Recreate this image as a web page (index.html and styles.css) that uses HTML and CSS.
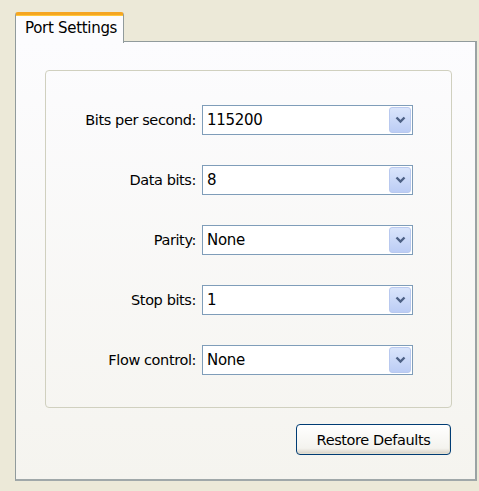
FILE: index.html
```html
<!DOCTYPE html>
<html>
<head>
<meta charset="utf-8">
<title>Port Settings</title>
<link rel="stylesheet" href="styles.css">
</head>
<body>
<div class="window">
  <div class="tabs">
    <div class="tab active">Port Settings</div>
  </div>
  <div class="panel">
    <fieldset class="group">
      <div class="row">
        <label class="label">Bits per second:</label>
        <div class="combo"><span class="value">115200</span><span class="drop"><svg width="11" height="8" viewBox="0 0 11 8"><path d="M1.5 1.5 L5.5 5.5 L9.5 1.5" fill="none" stroke="#4d6185" stroke-width="2.4"/></svg></span></div>
      </div>
      <div class="row">
        <label class="label">Data bits:</label>
        <div class="combo"><span class="value">8</span><span class="drop"><svg width="11" height="8" viewBox="0 0 11 8"><path d="M1.5 1.5 L5.5 5.5 L9.5 1.5" fill="none" stroke="#4d6185" stroke-width="2.4"/></svg></span></div>
      </div>
      <div class="row">
        <label class="label">Parity:</label>
        <div class="combo"><span class="value">None</span><span class="drop"><svg width="11" height="8" viewBox="0 0 11 8"><path d="M1.5 1.5 L5.5 5.5 L9.5 1.5" fill="none" stroke="#4d6185" stroke-width="2.4"/></svg></span></div>
      </div>
      <div class="row">
        <label class="label">Stop bits:</label>
        <div class="combo"><span class="value">1</span><span class="drop"><svg width="11" height="8" viewBox="0 0 11 8"><path d="M1.5 1.5 L5.5 5.5 L9.5 1.5" fill="none" stroke="#4d6185" stroke-width="2.4"/></svg></span></div>
      </div>
      <div class="row">
        <label class="label">Flow control:</label>
        <div class="combo"><span class="value">None</span><span class="drop"><svg width="11" height="8" viewBox="0 0 11 8"><path d="M1.5 1.5 L5.5 5.5 L9.5 1.5" fill="none" stroke="#4d6185" stroke-width="2.4"/></svg></span></div>
      </div>
    </fieldset>
    <div class="actions">
      <button class="btn">Restore Defaults</button>
    </div>
  </div>
</div>
</body>
</html>
```
FILE: styles.css
```css
html, body {
  margin: 0;
  padding: 0;
  background: #ece9d8;
}

body {
  font-family: "DejaVu Sans", "Liberation Sans", sans-serif;
  font-size: 14px;
  color: #000;
}

.window {
  padding: 12px 2px 10px 15px;
}

.tabs {
  display: flex;
  height: 30px;
  position: relative;
  z-index: 1;
}

/* selected tab: white face with the orange hot-track strip on top */
.tab {
  width: 109px;
  height: 31px;
  box-sizing: border-box;
  background: #fcfcfe;
  border: 1px solid #919b9c;
  border-bottom: none;
  border-top: 3px solid #f5a623;
  border-radius: 3px 3px 0 0;
  box-shadow: inset 0 1px 0 #ffc83c;
  padding: 4px 0 0 9px;
  font-size: 15px;
  letter-spacing: -0.3px;
}

.panel {
  height: 440px;
  box-sizing: border-box;
  margin-top: -1px;
  background: linear-gradient(#fcfcfe, #f5f4ef);
  border: 1px solid #919b9c;
  border-right: 2px solid #9aa3a4;
  border-bottom: 2px solid #a0a8a9;
  display: flex;
  flex-direction: column;
  padding: 28px 23px 0 29px;
}

.group {
  margin: 0;
  height: 338px;
  box-sizing: border-box;
  border: 1px solid #d0d0bf;
  border-radius: 4px;
  padding: 34px 38px 0 0;
  display: flex;
  flex-direction: column;
  gap: 30px;
}

.row {
  display: flex;
  align-items: center;
  height: 30px;
}

.label {
  flex: 1;
  text-align: right;
  padding-right: 6px;
  font-size: 14.5px;
  letter-spacing: -0.4px;
}

.combo {
  width: 211px;
  height: 30px;
  box-sizing: border-box;
  border: 1px solid #7f9db9;
  background: #fff;
  display: flex;
  align-items: center;
  padding: 1px 1px 1px 4px;
}

.value {
  flex: 1;
  font-size: 15px;
  letter-spacing: -0.3px;
}

.drop {
  width: 22px;
  height: 26px;
  box-sizing: border-box;
  border: 1px solid #b9c9ef;
  border-radius: 3px;
  background: linear-gradient(#dae5fb, #bccdf5);
  display: flex;
  align-items: center;
  justify-content: center;
}

.actions {
  display: flex;
  justify-content: flex-end;
  padding-top: 16px;
  padding-right: 1px;
}

.btn {
  width: 155px;
  height: 31px;
  font-family: inherit;
  font-size: 14.5px;
  letter-spacing: -0.4px;
  color: #000;
  border: 1px solid #003c74;
  border-radius: 4px;
  background: linear-gradient(#ffffff, #f4f3ee 80%, #d6d0c5);
  box-shadow: inset -1px -1px 0 #e3e0d2;
  padding: 0;
}
```
